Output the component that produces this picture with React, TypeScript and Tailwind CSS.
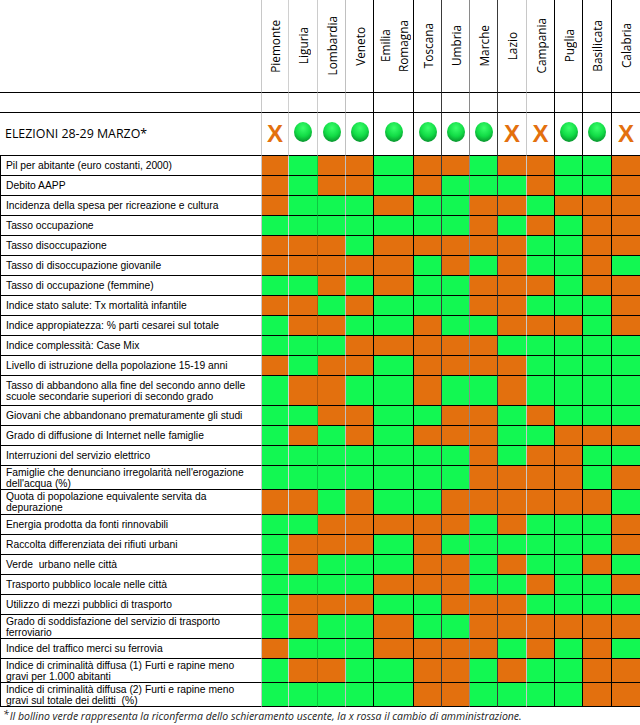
import type { ReactNode } from 'react';

// Regions, with the grid line colour drawn on the right of each column
const regions = [
    { name: ['Piemonte'], line: 'border-r-[#d0d0d0]', mark: 'x' },
    { name: ['Liguria'], line: 'border-r-black/20', mark: 'o' },
    { name: ['Lombardia'], line: 'border-r-[#c0c0c0]', mark: 'o' },
    { name: ['Veneto'], line: 'border-r-black', mark: 'o' },
    { name: ['Emilia', 'Romagna'], line: 'border-r-black', mark: 'o' },
    { name: ['Toscana'], line: 'border-r-[#3a3a3a]', mark: 'o' },
    { name: ['Umbria'], line: 'border-r-[#8a8a8a]', mark: 'o' },
    { name: ['Marche'], line: 'border-r-[#3a3a3a]', mark: 'o' },
    { name: ['Lazio'], line: 'border-r-[#c8c8c8]', mark: 'x' },
    { name: ['Campania'], line: 'border-r-black', mark: 'x' },
    { name: ['Puglia'], line: 'border-r-black', mark: 'o' },
    { name: ['Basilicata'], line: 'border-r-black', mark: 'o' },
    { name: ['Calabria'], line: 'border-r-0', mark: 'x' },
];

// O = orange (peggio), G = green (meglio)
const rows: { label: ReactNode; h: string; v: string }[] = [
    { label: 'Pil per abitante (euro costanti, 2000)', h: 'h-[20px]', v: 'OGOOGOOGOOGGO' },
    { label: 'Debito AAPP', h: 'h-[20px]', v: 'OGOOGOGGGOGGO' },
    { label: 'Incidenza della spesa per ricreazione e cultura', h: 'h-[20px]', v: 'OGGGOGGOOGOOO' },
    { label: 'Tasso occupazione', h: 'h-[20px]', v: 'GGGGGGGOGOGOO' },
    { label: 'Tasso disoccupazione', h: 'h-[20px]', v: 'OOOGOOOOOGGOO' },
    { label: 'Tasso di disoccupazione giovanile', h: 'h-[20px]', v: 'OOOOOGOGOGGOG' },
    { label: 'Tasso di occupazione (femmine)', h: 'h-[20px]', v: 'GGOGOGGOOOGOO' },
    { label: 'Indice stato salute: Tx mortalità infantile', h: 'h-[20px]', v: 'OOGOGGGOOGGGO' },
    { label: 'Indice appropiatezza: % parti cesarei sul totale', h: 'h-[20px]', v: 'GOOGGOGGOOOGO' },
    { label: 'Indice complessità: Case Mix', h: 'h-[20px]', v: 'GGGOOOOOGGGGG' },
    { label: 'Livello di istruzione della popolazione 15-19 anni', h: 'h-[20px]', v: 'OGOOGOOOOGGGG' },
    {
        label: <>Tasso di abbandono alla fine del secondo anno delle<br />scuole secondarie superiori di secondo grado</>,
        h: 'h-[30px]',
        v: 'GOOGGOGGOGGGG',
    },
    { label: 'Giovani che abbandonano prematuramente gli studi', h: 'h-[20px]', v: 'GGOOGGOOGOGGG' },
    { label: 'Grado di diffusione di Internet nelle famiglie', h: 'h-[20px]', v: 'GOGOGOOOGGOOO' },
    { label: 'Interruzioni del servizio elettrico', h: 'h-[20px]', v: 'GGGGGGGOGOOGG' },
    {
        label: <>Famiglie che denunciano irregolarità nell'erogazione<br />dell'acqua (%)</>,
        h: 'h-[24px]',
        v: 'GGGGGGGOOOOGO',
    },
    {
        label: <>Quota di popolazione equivalente servita da<br />depurazione</>,
        h: 'h-[25px]',
        v: 'OOGOGGOOOOOOG',
    },
    { label: 'Energia prodotta da fonti rinnovabili', h: 'h-[20px]', v: 'GGOOOOOGOGGGO' },
    { label: 'Raccolta differenziata dei rifiuti urbani', h: 'h-[20px]', v: 'GOOOGOGGGGGGO' },
    { label: 'Verde\u00a0 urbano nelle città', h: 'h-[20px]', v: 'GOGGGOOGOGGOG' },
    { label: 'Trasporto pubblico locale nelle città', h: 'h-[20px]', v: 'GGGGOOOGGOGGO' },
    { label: 'Utilizzo di mezzi pubblici di trasporto', h: 'h-[20px]', v: 'GOOOGGOOOGGGG' },
    {
        label: <>Grado di soddisfazione del servizio di trasporto<br />ferroviario</>,
        h: 'h-[24px]',
        v: 'GOGGOGGOOOOOO',
    },
    { label: 'Indice del traffico merci su ferrovia', h: 'h-[20px]', v: 'OGGGOOOOGOGOG' },
    {
        label: <>Indice di criminalità diffusa (1) Furti e rapine meno<br />gravi per 1.000 abitanti</>,
        h: 'h-[24px]',
        v: 'GOOGGOOGOGGOO',
    },
    {
        label: <>Indice di criminalità diffusa (2) Furti e rapine meno<br />gravi sul totale dei delitti&nbsp; (%)</>,
        h: 'h-[24px]',
        v: 'GGGGGOOGGGGOO',
    },
];

const Bollino = () => (
    <svg width="18" height="20" viewBox="0 0 18 20" className="mb-[4px]">
        <defs>
            <radialGradient id="bollino" cx="50%" cy="30%" r="75%">
                <stop offset="0%" stopColor="#3cff6c" />
                <stop offset="55%" stopColor="#12dc46" />
                <stop offset="100%" stopColor="#07882a" />
            </radialGradient>
        </defs>
        <ellipse cx="9" cy="10" rx="9" ry="10" fill="url(#bollino)" />
    </svg>
);

const App = () => {
    return (
        <div className="w-[640px] h-[725px] bg-white overflow-hidden text-black">
            <div className="grid grid-cols-[262px_27px_29px_28px_28px_40px_28px_28px_28px_29px_28px_28px_29px_28px]">
                {/* Header with region names */}
                <div className="h-[93px] border-b border-r border-b-black border-r-[#c8c8c8]" />
                {regions.map((r) => (
                    <div key={r.name.join()} className={`h-[93px] flex items-center justify-center border-b border-r border-b-black ${r.line}`}>
                        <span className="[writing-mode:vertical-rl] rotate-180 font-['Open_Sans',sans-serif] font-medium text-[11.8px] leading-[18px] whitespace-nowrap text-center">
                            {r.name.map((n, i) => (
                                <span key={n}>
                                    {i > 0 && <br />}
                                    {n}
                                </span>
                            ))}
                        </span>
                    </div>
                ))}

                {/* Empty row */}
                <div className="h-[20px] border-b border-r border-b-black border-r-[#c8c8c8]" />
                {regions.map((r) => (
                    <div key={r.name.join()} className={`h-[20px] border-b border-r border-b-black ${r.line}`} />
                ))}

                {/* Election results */}
                <div className="h-[43px] flex items-center pl-[5px] border-b border-r border-b-black border-r-[#c8c8c8] font-['Open_Sans',sans-serif] font-medium text-[12.4px]">
                    ELEZIONI 28-29 MARZO*
                </div>
                {regions.map((r) => (
                    <div key={r.name.join()} className={`h-[43px] flex items-center justify-center border-b border-r border-b-black ${r.line}`}>
                        {r.mark === 'x' ? (
                            <span className="font-['Liberation_Sans',sans-serif] font-bold text-[24px] leading-none text-[#e3700e]">X</span>
                        ) : (
                            <Bollino />
                        )}
                    </div>
                ))}

                {/* Indicators */}
                {rows.map((row, ri) => (
                    <div key={ri} className="contents">
                        <div className={`${row.h} flex items-center pl-[5px] border-l border-b border-r border-l-black border-b-black border-r-[#c8c8c8] font-['Liberation_Sans',sans-serif] text-[10.3px] leading-[11px] whitespace-nowrap`}>
                            <span>{row.label}</span>
                        </div>
                        {regions.map((r, ci) => (
                            <div
                                key={r.name.join()}
                                className={`${row.h} border-b border-r border-b-black ${r.line} ${row.v[ci] === 'G' ? 'bg-[#12f852]' : 'bg-[#e3700e]'}`}
                            />
                        ))}
                    </div>
                ))}
            </div>

            <p className="pl-[3px] h-[18px] flex items-center font-['Open_Sans',sans-serif] italic text-[10.5px] leading-none text-[#222]">
                <span className="relative -top-[2px] mr-[1px]">*</span>
                Il bollino verde rappresenta la riconferma dello schieramento uscente, la x rossa il cambio di amministrazione.
            </p>
        </div>
    );
};

export default App;
